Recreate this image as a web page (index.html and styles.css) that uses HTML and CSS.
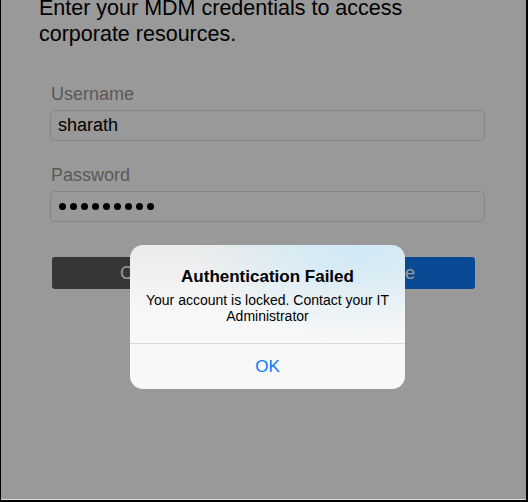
FILE: index.html
```html
<!DOCTYPE html>
<html lang="en">
<head>
<meta charset="utf-8">
<title>MDM Login</title>
<link rel="stylesheet" href="styles.css">
</head>
<body>
<div class="frame">
  <div class="screen">
    <div class="page">
      <p class="intro">Enter your MDM credentials to access corporate resources.</p>
      <div class="form">
        <div class="field">
          <div class="label">Username</div>
          <div class="input">sharath</div>
        </div>
        <div class="field">
          <div class="label">Password</div>
          <div class="input dots">
            <span class="dot"></span><span class="dot"></span><span class="dot"></span>
            <span class="dot"></span><span class="dot"></span><span class="dot"></span>
            <span class="dot"></span><span class="dot"></span><span class="dot"></span>
          </div>
        </div>
        <div class="actions">
          <div class="btn cancel">Cancel</div>
          <div class="btn primary">Continue</div>
        </div>
      </div>
    </div>
    <div class="overlay"></div>
    <div class="alert">
      <div class="alert-body">
        <div class="alert-title">Authentication Failed</div>
        <div class="alert-msg">Your account is locked. Contact your IT Administrator</div>
      </div>
      <div class="alert-btn">OK</div>
    </div>
  </div>
</div>
</body>
</html>
```
FILE: styles.css
```css
html, body {
  margin: 0;
  padding: 0;
  background: #ffffff;
}
body {
  font-family: "Liberation Sans", Arial, sans-serif;
  color: #000;
}
.frame {
  width: 528px;
  height: 502px;
  box-sizing: border-box;
  border-left: 1px solid #000;
  border-right: 2px solid #000;
  border-bottom: 2px solid #000;
  overflow: hidden;
}
.screen {
  position: relative;
  height: 500px;
  box-sizing: border-box;
  border-bottom: 1px solid #dcdcdc;
  background: #ffffff;
  overflow: hidden;
}
.page {
  display: flex;
  flex-direction: column;
}
.intro {
  margin: -5px 0 0 38px;
  width: 420px;
  font-size: 21.5px;
  line-height: 26px;
  color: #000;
}
.form {
  margin: 37px 0 0 49px;
  width: 435px;
  display: flex;
  flex-direction: column;
}
.field {
  display: flex;
  flex-direction: column;
  gap: 5px;
  margin-bottom: 24px;
}
.label {
  font-size: 18px;
  line-height: 21px;
  color: #969696;
  padding-left: 1px;
}
.input {
  height: 31px;
  box-sizing: border-box;
  border: 1px solid #dedede;
  border-radius: 5px;
  padding: 0 7px;
  font-size: 18px;
  line-height: 29px;
  color: #000;
  display: flex;
  align-items: center;
}
.dots {
  gap: 4px;
  padding-left: 8px;
}
.dot {
  width: 7px;
  height: 7px;
  border-radius: 50%;
  background: #000;
}
.actions {
  margin-top: 11px;
  padding: 0 10px 0 2px;
  display: flex;
  justify-content: space-between;
}
.btn {
  width: 192px;
  height: 32px;
  border-radius: 3px;
  display: flex;
  align-items: center;
  justify-content: center;
  font-size: 18px;
  color: #ffffff;
}
.cancel {
  background: #5a5a5a;
}
.primary {
  background: #127cf8;
}
.overlay {
  position: absolute;
  inset: 0;
  background: rgba(0, 0, 0, 0.4);
}
.alert {
  position: absolute;
  left: 129px;
  top: 245px;
  width: 275px;
  border-radius: 13px;
  overflow: hidden;
  background:
    radial-gradient(ellipse 170px 95px at 82% 0%, rgba(205, 233, 247, 0.95), rgba(225, 241, 250, 0) 100%),
    linear-gradient(#ebebeb, #f7f7f7 45%, #f8f8f8);
}
.alert-body {
  padding: 21px 14px 19px;
  text-align: center;
  border-bottom: 1px solid #dadada;
}
.alert-title {
  font-size: 17px;
  line-height: 22px;
  font-weight: bold;
  color: #000;
}
.alert-msg {
  margin-top: 4px;
  font-size: 14px;
  line-height: 16px;
  color: #000;
}
.alert-btn {
  height: 44px;
  padding-top: 1px;
  display: flex;
  align-items: center;
  justify-content: center;
  font-size: 17px;
  color: #0a7aff;
}
```
